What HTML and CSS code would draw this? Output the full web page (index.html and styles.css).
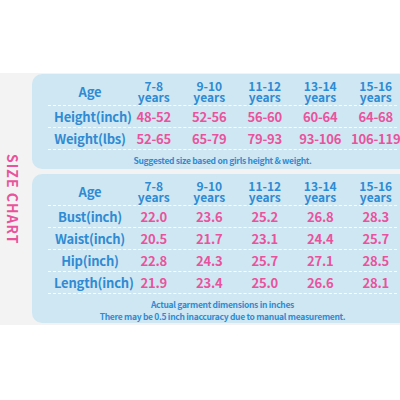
FILE: index.html
```html
<!DOCTYPE html>
<html lang="en">
<head>
  <meta charset="UTF-8">
  <title>size chart</title>
  <link rel="stylesheet" href="styles.css">
</head>
<body>
  <div class="panel">
    <div class="side">
      <span class="side-title">SIZE CHART</span>
    </div>
    <div class="boxes">
      <div class="box">
        <div class="row head">
          <div class="label">Age</div>
          <div class="age"><span>7-8</span><span>years</span></div>
          <div class="age"><span>9-10</span><span>years</span></div>
          <div class="age"><span>11-12</span><span>years</span></div>
          <div class="age"><span>13-14</span><span>years</span></div>
          <div class="age"><span>15-16</span><span>years</span></div>
        </div>
        <div class="row">
          <div class="label">Height(inch)</div>
          <div class="val">48-52</div><div class="val">52-56</div><div class="val">56-60</div><div class="val">60-64</div><div class="val">64-68</div>
        </div>
        <div class="row">
          <div class="label">Weight(lbs)</div>
          <div class="val">52-65</div><div class="val">65-79</div><div class="val">79-93</div><div class="val">93-106</div><div class="val">106-119</div>
        </div>
        <p class="note">Suggested size based on girls height &amp; weight.</p>
      </div>

      <div class="box">
        <div class="row head">
          <div class="label">Age</div>
          <div class="age"><span>7-8</span><span>years</span></div>
          <div class="age"><span>9-10</span><span>years</span></div>
          <div class="age"><span>11-12</span><span>years</span></div>
          <div class="age"><span>13-14</span><span>years</span></div>
          <div class="age"><span>15-16</span><span>years</span></div>
        </div>
        <div class="row">
          <div class="label">Bust(inch)</div>
          <div class="val">22.0</div><div class="val">23.6</div><div class="val">25.2</div><div class="val">26.8</div><div class="val">28.3</div>
        </div>
        <div class="row">
          <div class="label">Waist(inch)</div>
          <div class="val">20.5</div><div class="val">21.7</div><div class="val">23.1</div><div class="val">24.4</div><div class="val">25.7</div>
        </div>
        <div class="row">
          <div class="label">Hip(inch)</div>
          <div class="val">22.8</div><div class="val">24.3</div><div class="val">25.7</div><div class="val">27.1</div><div class="val">28.5</div>
        </div>
        <div class="row">
          <div class="label">Length(inch)</div>
          <div class="val">21.9</div><div class="val">23.4</div><div class="val">25.0</div><div class="val">26.6</div><div class="val">28.1</div>
        </div>
        <p class="note">Actual garment dimensions in inches<br>There may be 0.5 inch inaccuracy due to manual measurement.</p>
      </div>
    </div>
  </div>
</body>
</html>
```

FILE: styles.css
```css
body{
  margin: 0;
  background: white;
  font-family: "Noto Sans CJK SC", "Noto Sans", sans-serif;
  font-weight: 700;
  overflow: hidden;
}
.panel{
  margin-top: 73px;
  height: 252px;
  background: #f3f3f3;
  display: flex;
  overflow: hidden;
}
.side{
  width: 32px;
  flex: none;
  display: flex;
  align-items: center;
  justify-content: center;
  padding-right: 6px;
  box-sizing: border-box;
}
.side-title{
  writing-mode: vertical-rl;
  color: #e9539d;
  font-size: 14px;
  letter-spacing: 1px;
  line-height: 1;
}
.boxes{
  flex: 1;
  display: flex;
  flex-direction: column;
  gap: 5px;
  padding-top: 1px;
}
.box{
  background: #cfe7f2;
  border-radius: 10px 0 0 10px;
  margin-right: -10px;
  padding-left: 16px;
}
.box:first-child{
  height: 95px;
}
.box:last-child{
  height: 149px;
}
.row{
  display: grid;
  grid-template-columns: 78px repeat(5, 55.5px);
  width: 349px;
  height: 21px;
  align-items: center;
  border-bottom: 1px dashed white;
  font-size: 13px;
  letter-spacing: -0.2px;
  line-height: 1;
}
.row.head{
  align-items: end;
  padding-bottom: 3px;
  height: 28px;
}
.label{
  color: #2f8bd3;
  text-align: center;
  padding-left: 6px;
  white-space: nowrap;
}
.head .label{
  align-self: center;
  padding-top: 6px;
}
.age{
  color: #2f8bd3;
  display: flex;
  flex-direction: column;
  align-items: center;
  font-size: 12px;
  line-height: 11px;
  letter-spacing: 0;
}
.val{
  color: #e9539d;
  text-align: center;
  white-space: nowrap;
}
.note{
  margin: 0;
  width: 349px;
  text-align: center;
  color: #2f8bd3;
  font-size: 8.5px;
  letter-spacing: -0.3px;
  line-height: 12px;
  padding-top: 4px;
}
```
